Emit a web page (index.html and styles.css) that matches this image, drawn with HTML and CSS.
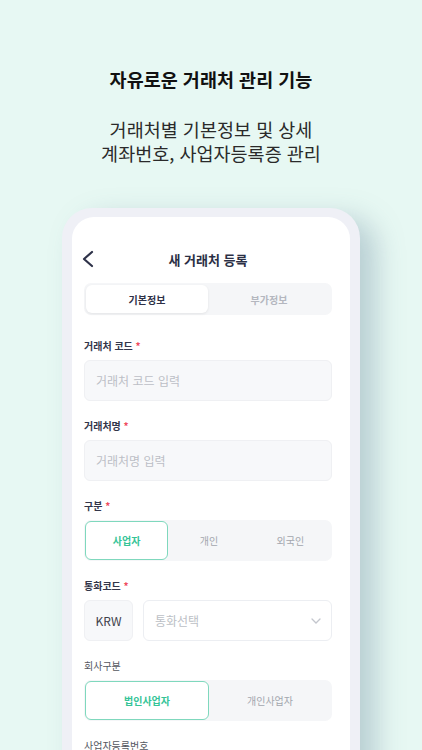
FILE: index.html
```html
<!DOCTYPE html>
<html lang="ko">
<head>
    <meta charset="UTF-8">
    <meta name="viewport" content="width=device-width, initial-scale=1.0">
    <title>새 거래처 등록</title>
    <link rel="stylesheet" href="styles.css">
</head>
<body>

    <!-- Promo heading -->
    <header class="promo">
        <h1>자유로운 거래처 관리 기능</h1>
        <p>거래처별 기본정보 및 상세<br>계좌번호, 사업자등록증 관리</p>
    </header>

    <!-- Phone mockup -->
    <div class="phone">
        <div class="screen">
            <div class="topbar">
                <svg class="back" width="14" height="18" viewBox="0 0 14 18">
                    <path d="M11 2 L3 9 L11 16" fill="none" stroke="#2e3249" stroke-width="2.2" stroke-linecap="round" stroke-linejoin="round"/>
                </svg>
                <span class="topbar-title">새 거래처 등록</span>
            </div>

            <div class="tabs">
                <div class="tab active">기본정보</div>
                <div class="tab">부가정보</div>
            </div>

            <div class="form">
                <div class="field">
                    <label>거래처 코드 <span class="req">*</span></label>
                    <div class="input">거래처 코드 입력</div>
                </div>

                <div class="field">
                    <label>거래처명 <span class="req">*</span></label>
                    <div class="input">거래처명 입력</div>
                </div>

                <div class="field">
                    <label>구분 <span class="req">*</span></label>
                    <div class="segment">
                        <div class="seg-item active">사업자</div>
                        <div class="seg-item">개인</div>
                        <div class="seg-item">외국인</div>
                    </div>
                </div>

                <div class="field">
                    <label>통화코드 <span class="req">*</span></label>
                    <div class="currency">
                        <div class="code">KRW</div>
                        <div class="select">
                            <span>통화선택</span>
                            <svg width="10" height="6" viewBox="0 0 10 6">
                                <path d="M1 1 L5 5 L9 1" fill="none" stroke="#c3c6cd" stroke-width="1.3" stroke-linecap="round"/>
                            </svg>
                        </div>
                    </div>
                </div>

                <div class="field">
                    <label class="light">회사구분</label>
                    <div class="segment">
                        <div class="seg-item active">법인사업자</div>
                        <div class="seg-item">개인사업자</div>
                    </div>
                </div>

                <div class="field">
                    <label class="light">사업자등록번호</label>
                    <div class="input">사업자등록번호 입력</div>
                </div>
            </div>
        </div>
    </div>

</body>
</html>
```

FILE: styles.css
```css
body {
    margin: 0;
    height: 750px;
    overflow: hidden;
    background-color: #e7f8f3;
    font-family: 'Noto Sans CJK KR', 'Noto Sans', sans-serif;
    color: #333;
}

/* Promo heading */
.promo {
    text-align: center;
    padding-top: 66px;
}

.promo h1 {
    margin: 0;
    font-size: 18.5px;
    font-weight: 700;
    line-height: 26px;
    color: #111;
}

.promo p {
    margin: 25px 0 0;
    font-size: 18.5px;
    line-height: 24px;
    color: #2a2a2a;
}

/* Phone mockup */
.phone {
    margin: 43px 0 0 62px;
    width: 278px;
    height: 600px;
    padding: 9px 10px 0 10px;
    background-color: #eff0f6;
    border-radius: 30px;
    box-shadow: 16px 10px 28px rgba(95, 125, 150, 0.34);
}

.screen {
    height: 100%;
    background: #fff;
    border-radius: 22px;
    padding: 24px 18px 0 12px;
    box-sizing: border-box;
}

.topbar {
    position: relative;
    height: 36px;
    display: flex;
    align-items: center;
    justify-content: center;
}

.back {
    position: absolute;
    left: -3px;
    top: 9px;
}

.topbar-title {
    font-size: 13px;
    font-weight: 700;
    color: #2b2f45;
}

.tabs {
    margin-top: 6px;
    display: flex;
    background: #f5f6f8;
    border-radius: 7px;
    padding: 2px;
    height: 32px;
    box-sizing: border-box;
}

.tab {
    flex: 1;
    display: flex;
    align-items: center;
    justify-content: center;
    font-size: 10px;
    font-weight: 700;
    color: #b4b7bf;
    border-radius: 6px;
}

.tab.active {
    background: #fff;
    color: #2e3147;
    box-shadow: 0 1px 3px rgba(0, 0, 0, 0.08);
}

/* Form */
.form {
    padding-top: 23px;
    display: flex;
    flex-direction: column;
    gap: 17px;
}

.field label {
    display: block;
    height: 16px;
    line-height: 16px;
    font-size: 10px;
    font-weight: 700;
    color: #33364a;
    margin-bottom: 6px;
}

.field label.light {
    font-weight: 400;
    color: #54575f;
}

.req {
    color: #ef4c5e;
}

.input {
    height: 41px;
    box-sizing: border-box;
    background: #f7f8fa;
    border: 1px solid #eff0f3;
    border-radius: 6px;
    padding-left: 11px;
    display: flex;
    align-items: center;
    font-size: 12px;
    color: #bcbfc6;
}

.segment {
    display: flex;
    height: 41px;
    box-sizing: border-box;
    background: #f5f6f8;
    border-radius: 7px;
    padding: 1px;
}

.seg-item {
    flex: 1;
    display: flex;
    align-items: center;
    justify-content: center;
    font-size: 10px;
    color: #a3a6ae;
    border-radius: 6px;
}

.seg-item.active {
    background: #fff;
    border: 1.5px solid #7fd8bd;
    color: #35c497;
    font-weight: 700;
}

.currency {
    display: flex;
    gap: 10px;
    height: 41px;
}

.code {
    width: 49px;
    box-sizing: border-box;
    background: #f7f8fa;
    border: 1px solid #eff0f3;
    border-radius: 6px;
    display: flex;
    align-items: center;
    justify-content: center;
    font-size: 12px;
    color: #3f424c;
}

.select {
    flex: 1;
    box-sizing: border-box;
    border: 1px solid #eceef2;
    border-radius: 6px;
    display: flex;
    align-items: center;
    justify-content: space-between;
    padding: 0 10px 0 11px;
    font-size: 12px;
    color: #bcbfc6;
}
```
